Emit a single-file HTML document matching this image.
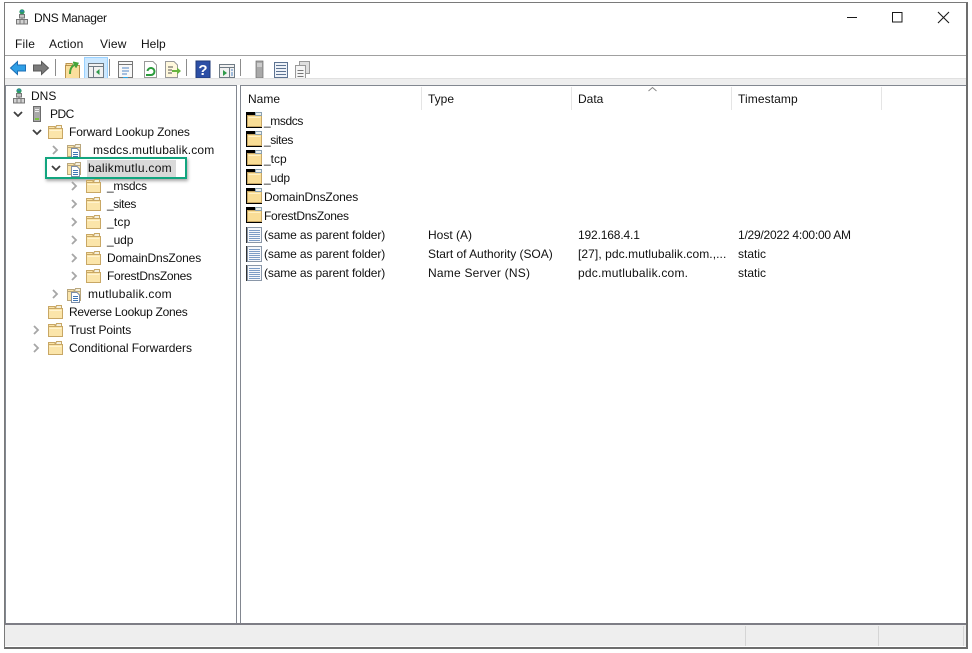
<!DOCTYPE html>
<html><head><meta charset="utf-8"><title>DNS Manager</title>
<style>
html,body{margin:0;padding:0;background:#fff;width:972px;height:653px;overflow:hidden}
body{font-family:"Liberation Sans",sans-serif;font-size:12px;color:#111;position:relative}
.a{position:absolute}
.t{position:absolute;white-space:nowrap;line-height:16px;height:16px}
svg{position:absolute;overflow:visible}
</style></head><body>
<svg width="0" height="0" style="position:absolute">
<defs>
<g id="fold"><path d="M7.500 4.500L8.500 1.500H13.500V4.500Z" fill="#f4efdd" stroke="#c8a765"/><path d="M.5 2.500H7V4.500H.5Z" fill="#fbe3a4" stroke="#c8a765"/><path d="M.5 4.500H14.500V14.500H.5Z" fill="#fbe5aa" stroke="#c8a765"/><path d="M1.500 6.500H13.500" stroke="#fff3cf"/></g>
<g id="zone"><path d="M7.500 4.500L8.500 1.500H13.500V4.500Z" fill="#f4efdd" stroke="#b9a67c"/><path d="M.5 2.500H7V4.500H.5Z" fill="#fbe3a4" stroke="#b9a67c"/><path d="M.5 4.500H13.500V13.500H.5Z" fill="#fbe5aa" stroke="#b9a67c"/><path d="M4.500 5.500H10L12.500 8V15.500H4.500Z" fill="#fff" stroke="#7d8ea8"/><path d="M6 9.500H11M6 11.500H11M6 13.500H11" stroke="#3f76b5"/></g>
<path id="chd" d="M0 0L4 4L8 0" fill="none" stroke="#3f3f3f" stroke-width="1.8"/>
<path id="chr" d="M0 0L4 4L0 8" fill="none" stroke="#a6a6a6" stroke-width="1.8"/>
<g id="lfold"><path d="M0 0H16V16H0Z" fill="#000"/><path d="M1.500 3.500H15.500V14.500H1.500Z" fill="#f9dd96" stroke="#c8a765"/><path d="M9.500 .5H15.500V3.500H9.500Z" fill="#eef0ea" stroke="#8aa0b0"/><path d="M2.500 5.500H14.500" stroke="#fff0c4"/></g>
<g id="lrec"><path d="M0 0H16V16H0Z" fill="#333"/><path d="M1.500 .5H15.500V15.500H1.500Z" fill="#f6f8fc" stroke="#8a97a8"/><path d="M3 3.500H14M3 5.500H14M3 7.500H14M3 9.500H14M3 11.500H14M3 13.500H14" stroke="#7c9cc6"/></g>
<g id="dns"><circle cx="6" cy="2.800" r="2.600" fill="#2f9a63"/><path d="M4.500 2H7.500" stroke="#2f7fc9" stroke-width="1.400"/><rect x="3.500" y="5.500" width="5" height="3.500" fill="#c4c4c4" stroke="#777"/><path d="M6 9V11" stroke="#777"/><rect x=".5" y="10.500" width="11" height="4.500" fill="#d2d2d2" stroke="#777"/><path d="M4 10.500V15M8 10.500V15" stroke="#777"/></g>
</defs>
</svg>

<!-- window frame -->
<div class="a" style="left:4px;top:2px;width:961px;height:644px;border:1px solid #7a7a7a;border-right:2px solid #6d6d6d;border-bottom:2px solid #6d6d6d;background:#fff"></div>

<!-- title -->
<svg style="left:16px;top:9px" width="12" height="16"><use href="#dns"/></svg>
<div class="t" style="left:34px;top:10px;letter-spacing:-.3px">DNS Manager</div>
<svg style="left:845px;top:10px" width="115" height="14" fill="none" stroke="#1a1a1a"><path d="M2 7.500H12"/><rect x="47.500" y="2.500" width="9.500" height="9.500"/><path d="M93 2L104 13M104 2L93 13" stroke-width="1.100"/></svg>

<!-- menu -->
<div class="t" style="left:15px;top:36px;letter-spacing:.2px">File</div>
<div class="t" style="left:49px;top:36px;letter-spacing:.2px">Action</div>
<div class="t" style="left:100px;top:36px;letter-spacing:.2px">View</div>
<div class="t" style="left:141px;top:36px;letter-spacing:0">Help</div>
<div class="a" style="left:5px;top:55px;width:961px;height:1px;background:#a0a0a0"></div>

<!-- toolbar -->
<div class="a" style="left:84px;top:57px;width:22px;height:20px;background:#cce8ff;border:1px solid #99d1ff"></div>
<div class="a" style="left:55px;top:59px;width:1px;height:17px;background:#8c8c8c"></div>
<div class="a" style="left:109px;top:59px;width:1px;height:17px;background:#8c8c8c"></div>
<div class="a" style="left:186px;top:59px;width:1px;height:17px;background:#8c8c8c"></div>
<div class="a" style="left:240px;top:59px;width:1px;height:17px;background:#8c8c8c"></div>
<svg style="left:0;top:52px" width="330" height="30">
<path d="M10.500 16L17.500 9.500V13H25.500V19H17.500V22.500Z" fill="#2f9fe6" stroke="#1d6fb5"/>
<path d="M48.500 16L41.500 9.500V13H33.500V19H41.500V22.500Z" fill="#7b7b7b" stroke="#5a5a5a"/>
<path d="M65.500 13.500H79.500V26.500H65.500Z" fill="#fbdf9c" stroke="#b9924d"/><path d="M66 11.500H72L73 13.500H66Z" fill="#fbdf9c" stroke="#b9924d"/><path d="M70 22C70 16 72 14 76 12M73 10.500L77.500 11.500L75.500 15.500" fill="none" stroke="#46a43a" stroke-width="2"/>
<rect x="88.500" y="11.500" width="15" height="14" fill="#f1f1f1" stroke="#6f7b85"/><path d="M88.500 14.500H103.500M93.500 15V25.500" stroke="#6f7b85"/><path d="M99.500 17V23L96 20Z" fill="#2e9a4a"/>
<rect x="118.500" y="9.500" width="14" height="16" fill="#f8f8f8" stroke="#777"/><path d="M118.500 12.500H132.500" stroke="#777"/><path d="M122 16H129M122 19H129M122 22H127" stroke="#4f86c6"/><path d="M123 26H128" stroke="#2aa4e6" stroke-width="2"/>
<path d="M144.500 9.500H153L156.500 13V25.500H144.500Z" fill="#fff" stroke="#999"/><path d="M147.500 19A3.500 3.500 0 1 1 151 23M146 23L151 23" fill="none" stroke="#2c9c3d" stroke-width="2"/>
<path d="M165.500 9.500H174L177.500 13V25.500H165.500Z" fill="#fff8dc" stroke="#999"/><path d="M168 15H173M168 18H172M168 21H172" stroke="#555"/><path d="M172 18H177V15.500L181 19L177 22.500V20H172Z" fill="#68b53f"/>
<rect x="196" y="9" width="14" height="17" fill="#2c4fa6" stroke="#1e3878"/><text x="203" y="23" text-anchor="middle" font-family="Liberation Sans" font-size="15" font-weight="bold" fill="#fff">?</text>
<rect x="219.500" y="12.500" width="15" height="13" fill="#f1f1f1" stroke="#6f7b85"/><path d="M219.500 15.500H234.500M229.500 16V25.500" stroke="#6f7b85"/><path d="M223 18V24L227 21Z" fill="#2e9a4a"/><path d="M231 18H233M231 21H233M231 23H233" stroke="#4f86c6"/>
<rect x="256" y="9" width="7" height="17" fill="#a9a9a9" stroke="#6c6c6c" stroke-width=".7"/><path d="M257 12H262M257 14H262" stroke="#eee"/>
<rect x="274.500" y="10.500" width="13" height="15" fill="#eef2f8" stroke="#5d7392"/><path d="M276 13.500H286M276 16.500H286M276 19.500H286M276 22.500H286" stroke="#5d7392"/>
<path d="M299.500 9.500H309.500V21.500H299.500Z" fill="#dfdfdf" stroke="#999"/><path d="M295.500 13.500H305.500V26.500H295.500Z" fill="#f5f5f5" stroke="#999"/><path d="M297.500 18.500H303.500M297.500 21.500H303.500M297.500 24.500H303.500" stroke="#777"/>
</svg>

<!-- band -->
<div class="a" style="left:5px;top:78px;width:961px;height:7px;background:#eeeeee;border-top:1px solid #e0e0e0;box-sizing:border-box"></div>

<!-- panes -->
<div class="a" style="left:5px;top:85px;width:230px;height:538px;border:1px solid #828790;background:#fff"></div>
<div class="a" style="left:240px;top:85px;width:725px;height:538px;border-top:1px solid #828790;border-left:1px solid #828790;border-bottom:1px solid #828790;background:#fff"></div>
<div class="a" style="left:5px;top:625px;width:961px;height:21px;background:#eeeeee"></div>
<div class="a" style="left:5px;top:623px;width:961px;height:2px;background:#7d7d85"></div>
<div class="a" style="left:745px;top:626px;width:1px;height:20px;background:#d5d5d5"></div>
<div class="a" style="left:878px;top:626px;width:1px;height:20px;background:#d5d5d5"></div>
<div class="a" style="left:963px;top:626px;width:1px;height:20px;background:#d5d5d5"></div>

<!-- tree -->
<svg style="left:13px;top:88px" width="12" height="16"><use href="#dns"/></svg>
<div class="t" style="left:31px;top:88px">DNS</div>
<svg style="left:14px;top:112px" width="9" height="5"><use href="#chd"/></svg>
<svg style="left:33px;top:106px" width="9" height="16"><rect x=".5" y=".5" width="7" height="15" fill="#a9a9a9" stroke="#6c6c6c"/><path d="M2 3.500H6M2 5.500H6" stroke="#eee"/><path d="M2 13H6" stroke="#7ac143" stroke-width="2"/></svg>
<div class="t" style="left:50px;top:106px;letter-spacing:-.5px">PDC</div>
<svg style="left:33px;top:130px" width="9" height="5"><use href="#chd"/></svg>
<svg style="left:48px;top:124px" width="16" height="16"><use href="#fold"/></svg>
<div class="t" style="left:69px;top:124px;letter-spacing:-.13px">Forward Lookup Zones</div>
<svg style="left:53px;top:146px" width="9" height="9"><use href="#chr"/></svg>
<svg style="left:67px;top:143px" width="16" height="16"><use href="#zone"/></svg>
<div class="t" style="left:93px;top:142px;letter-spacing:.17px">msdcs.mutlubalik.com</div>

<div class="a" style="left:87px;top:160px;width:89px;height:17px;background:#d9d9d9"></div>
<div class="a" style="left:45px;top:157px;width:138px;height:18px;border:2px solid #12a57f;box-shadow:1px 2px 3px rgba(0,0,0,.35)"></div>
<svg style="left:52px;top:166px" width="9" height="5"><use href="#chd"/></svg>
<svg style="left:67px;top:161px" width="16" height="16"><use href="#zone"/></svg>
<div class="t" style="left:88px;top:160px;letter-spacing:.28px">balikmutlu.com</div>

<svg style="left:72px;top:182px" width="9" height="9"><use href="#chr"/></svg>
<svg style="left:86px;top:178px" width="16" height="16"><use href="#fold"/></svg>
<div class="t" style="left:107px;top:178px;letter-spacing:-.28px">_msdcs</div>
<svg style="left:72px;top:200px" width="9" height="9"><use href="#chr"/></svg>
<svg style="left:86px;top:196px" width="16" height="16"><use href="#fold"/></svg>
<div class="t" style="left:107px;top:196px;letter-spacing:-.4px">_sites</div>
<svg style="left:72px;top:218px" width="9" height="9"><use href="#chr"/></svg>
<svg style="left:86px;top:214px" width="16" height="16"><use href="#fold"/></svg>
<div class="t" style="left:107px;top:214px;letter-spacing:.2px">_tcp</div>
<svg style="left:72px;top:236px" width="9" height="9"><use href="#chr"/></svg>
<svg style="left:86px;top:232px" width="16" height="16"><use href="#fold"/></svg>
<div class="t" style="left:107px;top:232px;letter-spacing:-.1px">_udp</div>
<svg style="left:72px;top:254px" width="9" height="9"><use href="#chr"/></svg>
<svg style="left:86px;top:250px" width="16" height="16"><use href="#fold"/></svg>
<div class="t" style="left:107px;top:250px;letter-spacing:-.14px">DomainDnsZones</div>
<svg style="left:72px;top:272px" width="9" height="9"><use href="#chr"/></svg>
<svg style="left:86px;top:268px" width="16" height="16"><use href="#fold"/></svg>
<div class="t" style="left:107px;top:268px;letter-spacing:-.28px">ForestDnsZones</div>
<svg style="left:53px;top:290px" width="9" height="9"><use href="#chr"/></svg>
<svg style="left:67px;top:287px" width="16" height="16"><use href="#zone"/></svg>
<div class="t" style="left:88px;top:286px;letter-spacing:.28px">mutlubalik.com</div>
<svg style="left:48px;top:304px" width="16" height="16"><use href="#fold"/></svg>
<div class="t" style="left:69px;top:304px;letter-spacing:-.28px">Reverse Lookup Zones</div>
<svg style="left:34px;top:326px" width="9" height="9"><use href="#chr"/></svg>
<svg style="left:48px;top:322px" width="16" height="16"><use href="#fold"/></svg>
<div class="t" style="left:69px;top:322px;letter-spacing:-.12px">Trust Points</div>
<svg style="left:34px;top:344px" width="9" height="9"><use href="#chr"/></svg>
<svg style="left:48px;top:340px" width="16" height="16"><use href="#fold"/></svg>
<div class="t" style="left:69px;top:340px;letter-spacing:-.05px">Conditional Forwarders</div>

<!-- list header -->
<div class="t" style="left:248px;top:91px">Name</div>
<div class="t" style="left:428px;top:91px">Type</div>
<div class="t" style="left:578px;top:91px">Data</div>
<div class="t" style="left:738px;top:91px;letter-spacing:.1px">Timestamp</div>
<div class="a" style="left:421px;top:87px;width:1px;height:23px;background:#e5e5e5"></div>
<div class="a" style="left:571px;top:87px;width:1px;height:23px;background:#e5e5e5"></div>
<div class="a" style="left:731px;top:87px;width:1px;height:23px;background:#e5e5e5"></div>
<div class="a" style="left:881px;top:87px;width:1px;height:23px;background:#e5e5e5"></div>
<svg style="left:648px;top:87px" width="9" height="5"><path d="M.5 4L4.500 .5L8.500 4" fill="none" stroke="#888"/></svg>

<!-- list rows -->
<svg style="left:246px;top:112px" width="16" height="16"><use href="#lfold"/></svg>
<div class="t" style="left:264px;top:113px;letter-spacing:-.4px">_msdcs</div>
<svg style="left:246px;top:131px" width="16" height="16"><use href="#lfold"/></svg>
<div class="t" style="left:264px;top:132px;letter-spacing:-.4px">_sites</div>
<svg style="left:246px;top:150px" width="16" height="16"><use href="#lfold"/></svg>
<div class="t" style="left:264px;top:151px">_tcp</div>
<svg style="left:246px;top:169px" width="16" height="16"><use href="#lfold"/></svg>
<div class="t" style="left:264px;top:170px;letter-spacing:-.2px">_udp</div>
<svg style="left:246px;top:188px" width="16" height="16"><use href="#lfold"/></svg>
<div class="t" style="left:264px;top:189px;letter-spacing:-.14px">DomainDnsZones</div>
<svg style="left:246px;top:207px" width="16" height="16"><use href="#lfold"/></svg>
<div class="t" style="left:264px;top:208px;letter-spacing:-.28px">ForestDnsZones</div>

<svg style="left:246px;top:227px" width="16" height="16"><use href="#lrec"/></svg>
<div class="t" style="left:264px;top:227px;letter-spacing:-.13px">(same as parent folder)</div>
<div class="t" style="left:428px;top:227px">Host (A)</div>
<div class="t" style="left:578px;top:227px;letter-spacing:-.15px">192.168.4.1</div>
<div class="t" style="left:738px;top:227px;letter-spacing:-.23px">1/29/2022 4:00:00 AM</div>

<svg style="left:246px;top:246px" width="16" height="16"><use href="#lrec"/></svg>
<div class="t" style="left:264px;top:246px;letter-spacing:-.13px">(same as parent folder)</div>
<div class="t" style="left:428px;top:246px;letter-spacing:-.03px">Start of Authority (SOA)</div>
<div class="t" style="left:578px;top:246px;letter-spacing:.08px">[27], pdc.mutlubalik.com.,...</div>
<div class="t" style="left:738px;top:246px">static</div>

<svg style="left:246px;top:265px" width="16" height="16"><use href="#lrec"/></svg>
<div class="t" style="left:264px;top:265px;letter-spacing:-.13px">(same as parent folder)</div>
<div class="t" style="left:428px;top:265px;letter-spacing:.22px">Name Server (NS)</div>
<div class="t" style="left:578px;top:265px;letter-spacing:.22px">pdc.mutlubalik.com.</div>
<div class="t" style="left:738px;top:265px">static</div>
</body></html>
